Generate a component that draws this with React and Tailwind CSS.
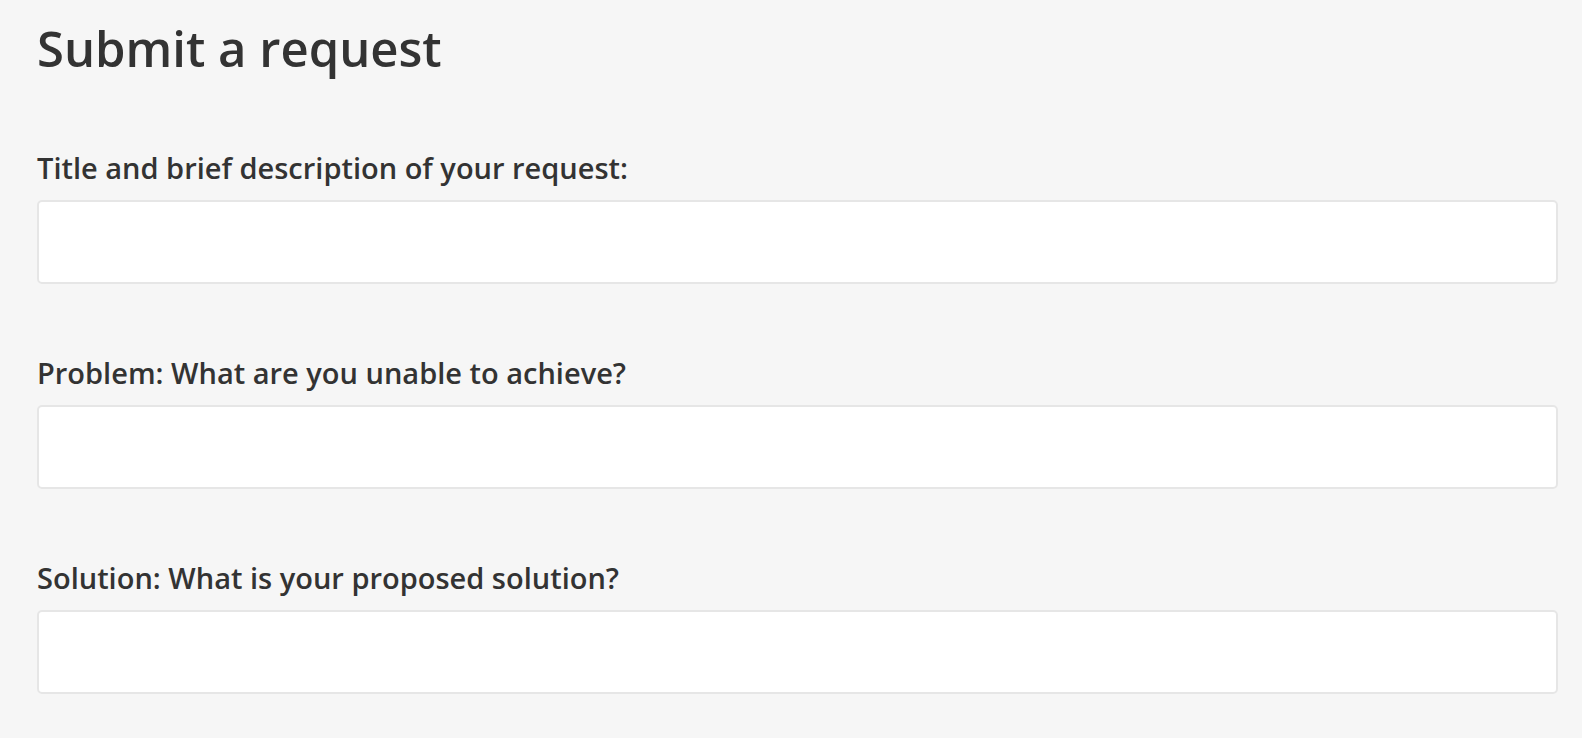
export default function App() {
  const fields = [
    "Title and brief description of your request:",
    "Problem: What are you unable to achieve?",
    "Solution: What is your proposed solution?",
  ];
  return (
    <div className="min-h-screen w-full bg-[#f6f6f6] pl-[37px] pr-[24px] pt-[19px] text-[#333] font-['Open_Sans',sans-serif]">
      <h1 className="text-[49px] leading-[58px] font-semibold">Submit a request</h1>
      <form className="mt-[73px] flex flex-col gap-[71px]">
        {fields.map((label) => (
          <div key={label} className="flex flex-col">
            <label className="text-[29px] leading-[36px] font-semibold mb-[14px]">{label}</label>
            <input
              type="text"
              className="h-[84px] w-full rounded-[5px] border-2 border-[#e6e6e6] bg-white outline-none"
            />
          </div>
        ))}
      </form>
    </div>
  );
}
